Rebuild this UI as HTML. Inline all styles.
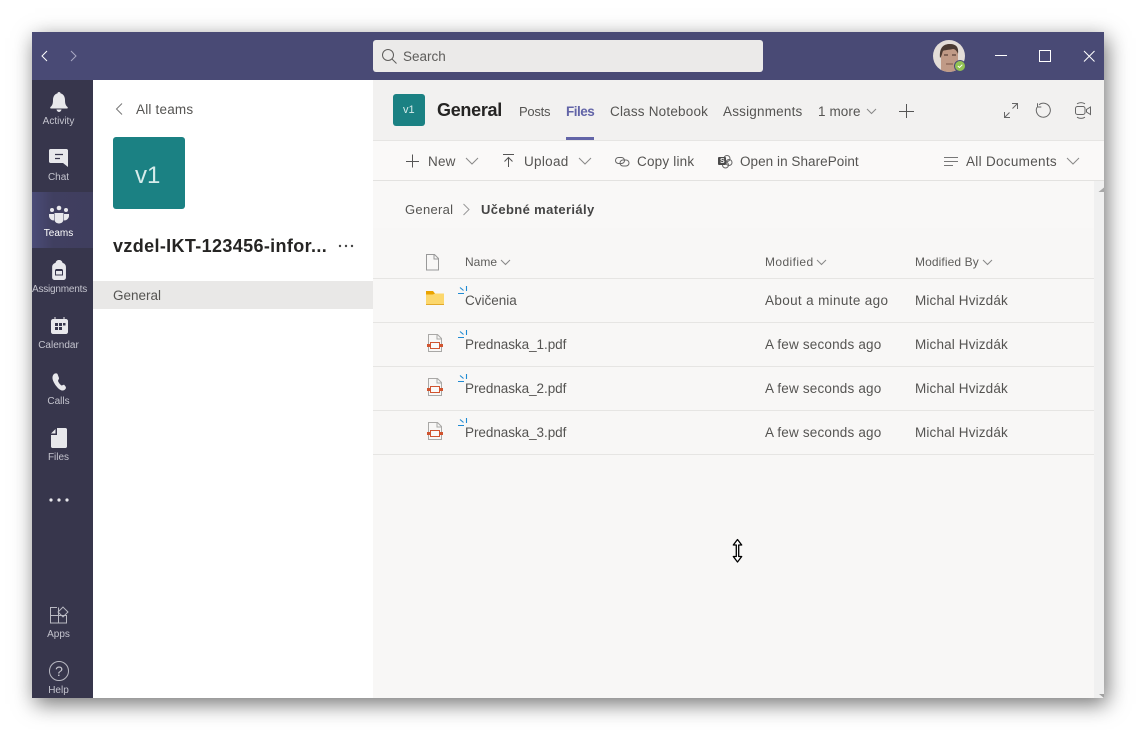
<!DOCTYPE html>
<html><head><meta charset="utf-8">
<style>
html,body{margin:0;padding:0;width:1136px;height:730px;background:#fff;overflow:hidden;font-family:"Liberation Sans",sans-serif;color:#444}
*{box-sizing:border-box}
.a{position:absolute;white-space:nowrap;line-height:1}
#win{position:absolute;left:32px;top:32px;width:1072px;height:666px;box-shadow:3px 6px 20px rgba(0,0,0,.55)}
.r{position:absolute}
.rl{position:absolute;left:28px;width:61px;text-align:center;font-size:10px;color:#c4c4ce;line-height:1;white-space:nowrap}
.t{font-size:13.5px;color:#555452}
.line{position:absolute;height:1px;background:#e6e5e3}
svg{position:absolute;overflow:visible;left:0;top:0}
</style></head><body>
<div id="win"></div>
<div class="r" style="left:32px;top:32px;width:1072px;height:48px;background:#494a75"></div>
<div class="r" style="left:32px;top:80px;width:61px;height:618px;background:#37364c"></div>
<div class="r" style="left:32px;top:192px;width:61px;height:56px;background:linear-gradient(90deg,#4b4c78,#403f60 35%,#3f3e5e)"></div>
<div class="r" style="left:93px;top:80px;width:280px;height:618px;background:#fff"></div>
<div class="r" style="left:373px;top:80px;width:731px;height:618px;background:#f8f7f6"></div>
<div class="r" style="left:373px;top:80px;width:731px;height:60px;background:#f2f1f0"></div>
<div class="r" style="left:373px;top:141px;width:731px;height:39px;background:#faf9f8"></div>
<div class="line" style="left:373px;top:140px;width:731px"></div>
<div class="line" style="left:373px;top:180px;width:731px;background:#e3e2e0"></div>
<div class="r" style="left:1094px;top:181px;width:10px;height:517px;background:#f0f0f0"></div>
<div class="r" style="left:373px;top:181px;width:721px;height:47px;background:#f9f8f7"></div>

<!-- titlebar -->
<div class="r" style="left:373px;top:40px;width:390px;height:32px;background:#ebeae9;border-radius:3px"></div>
<svg width="1136" height="90" fill="none">
<path d="M47 51l-5 5 5 5" stroke="#fff"/>
<path d="M71 51l5 5-5 5" stroke="#a9a9c4"/>
<circle cx="388" cy="55" r="5.500" stroke="#5e5d5b"/><path d="M392 59l4.500 4.500" stroke="#5e5d5b"/>
<path d="M995 55.500h12" stroke="#fff"/>
<rect x="1039.500" y="50.500" width="11" height="11" stroke="#fff"/>
<path d="M1084 51l10.500 10.500M1094.500 51l-10.500 10.500" stroke="#fff"/>
</svg>
<div class="a" style="left:403px;top:50px;font-size:13.500px;color:#5e5d5b">Search</div>
<svg width="1136" height="90">
<defs><clipPath id="c"><circle cx="949" cy="56" r="16"/></clipPath></defs>
<g clip-path="url(#c)"><rect x="933" y="40" width="32" height="32" fill="#e3ddd8"/>
<path d="M941 72V54c0-8 4-10 9-10s8 3 8 10v18z" fill="#c09a86"/>
<path d="M940 58c-1-11 4-14 10-14 6 0 9 3 8 10-1-3-3-5-5-5-4 1-9 1-10 2-1 2-1 5-3 7z" fill="#4a3a32"/>
<path d="M944 55h4M952 55h4" stroke="#5a4238" stroke-width="1.200"/>
<path d="M946 64h7" stroke="#7d5548"/></g>
<circle cx="960" cy="66" r="6" fill="#494a75"/><circle cx="960" cy="66" r="5" fill="#92c353"/>
<path d="M957.800 66l1.700 1.500 2.800-2.800" stroke="#fff" fill="none"/>
</svg>

<!-- rail icons -->
<svg width="100" height="700" fill="#e8e8ec">
<path d="M59 92c-.9 0-1.500.6-1.600 1.400-3 .8-4.400 3.400-4.400 6.600 0 3.500-.6 5.500-2.500 7-.6.5-.3 1.500.5 1.500h16c.8 0 1.100-1 .5-1.500-1.900-1.500-2.500-3.500-2.500-7 0-3.200-1.400-5.800-4.400-6.600-.1-.8-.7-1.400-1.600-1.400z"/>
<path d="M56.500 109.500h5c-.3 1.400-1.200 2.500-2.500 2.500s-2.200-1.100-2.500-2.500z"/>
<path d="M50.500 149h16c.8 0 1.500.7 1.500 1.500V167l-5-4H50.500c-.8 0-1.500-.7-1.500-1.500v-11c0-.8.7-1.500 1.500-1.500z"/>
<path d="M55 154.500h8M55 158.500h5" stroke="#37364c" stroke-width="1.200" fill="none"/>
<circle cx="52" cy="210" r="2"/><circle cx="59" cy="208" r="2.300"/><circle cx="66" cy="210" r="2"/>
<path d="M49 214h5v5c0 .5 0 1-.2 1.500C51 220.500 49 218 49 216zM69 214h-5v5c0 .5 0 1 .2 1.500 2.800 0 4.800-2.500 4.800-4.500zM54.500 213h9v6.500c0 2.200-2 4-4.500 4s-4.500-1.800-4.500-4z"/>
<path d="M53 267c0-2 1-3.500 3-4.300.3-1.700 1.500-2.700 3-2.700s2.700 1 3 2.700c2 .8 3 2.300 3 4.300v10.500c0 1.500-1 2.500-2.500 2.500h-7c-1.500 0-2.500-1-2.500-2.500z" transform="matrix(1.150 0 0 1 -8.800 0)"/>
<path d="M55.500 269.500h7M55.500 270.500h7v4.500h-7z" stroke="#37364c" fill="none"/>
<path d="M53 319h13c1.100 0 2 .9 2 2v11c0 1.100-.9 2-2 2H53c-1.100 0-2-.9-2-2v-11c0-1.100.9-2 2-2z"/>
<path d="M55 317v2M64 317v2" stroke="#e8e8ec"/>
<path d="M55 323h3v3h-3zM59 323h3v3h-3zM63 323h2.500v2.500H63zM55 327h3v3h-3zM59 327h3v3h-3z" fill="#37364c"/>
<path d="M54 374c1-.8 3-1 3.500 0l1.500 4c.2 1-1 2-1 3 .8 2 2 3.500 3.500 4.500 1 0 1.800-1 2.700-.7l1.500 2c.5 1 .2 2-1 3-1.500 1.200-3.500.8-5-.3-3-2.200-6-6.500-7-10-.6-2.200 0-4.300 1.300-5.500z"/>
<path d="M57 428h8.500c.8 0 1.500.7 1.500 1.500v17c0 .8-.7 1.500-1.500 1.500h-13c-.8 0-1.500-.7-1.500-1.500V435h6z"/>
<path d="M55.500 429v4.500H51z"/>
<circle cx="51" cy="500" r="1.600"/><circle cx="59" cy="500" r="1.600"/><circle cx="67" cy="500" r="1.600"/>
<g fill="none" stroke="#b9b9c2">
<path d="M57 607.500h-6.500v15.500h16v-7.500h-16M58.500 607.500v15.500"/>
<rect x="59.500" y="608.500" width="7" height="7" transform="rotate(45 63 612)"/>
<circle cx="59" cy="671" r="9.500"/>
</g>
</svg>
<div class="a" style="left:54px;top:664px;font-size:14px;color:#c8c8d0;width:10px;text-align:center">?</div>
<div class="rl" style="top:117px">Activity</div>
<div class="rl" style="top:173px">Chat</div>
<div class="rl" style="top:229px;color:#fff">Teams</div>
<div class="rl" style="top:285px;left:29px;letter-spacing:-.2px">Assignments</div>
<div class="rl" style="top:341px">Calendar</div>
<div class="rl" style="top:397px">Calls</div>
<div class="rl" style="top:453px">Files</div>
<div class="rl" style="top:630px">Apps</div>
<div class="rl" style="top:686px">Help</div>

<!-- left panel -->
<svg width="400" height="200" fill="none"><path d="M122 103.500l-5.500 5.500 5.500 5.500" stroke="#777"/></svg>
<div class="a t" style="left:136px;top:103px;letter-spacing:.2px">All teams</div>
<div class="r" style="left:113px;top:137px;width:72px;height:72px;background:#1b8183;border-radius:3px"></div>
<div class="a" style="left:135px;top:164px;font-size:24px;color:#d7eceb">v1</div>
<div class="a" style="left:113px;top:237px;font-size:18px;font-weight:700;color:#252423;letter-spacing:.36px">vzdel-IKT-123456-infor...</div>
<svg width="400" height="300" fill="#444"><circle cx="340" cy="246" r="1.200"/><circle cx="346" cy="246" r="1.200"/><circle cx="352" cy="246" r="1.200"/></svg>
<div class="r" style="left:93px;top:281px;width:280px;height:28px;background:#e9e8e7"></div>
<div class="a t" style="left:113px;top:289px">General</div>

<!-- header -->
<div class="r" style="left:393px;top:94px;width:32px;height:32px;background:#1b8183;border-radius:3px"></div>
<div class="a" style="left:403px;top:105px;font-size:11px;color:#d7eceb">v1</div>
<div class="a" style="left:437px;top:101px;font-size:18px;font-weight:700;color:#252423;letter-spacing:-.3px">General</div>
<div class="a t" style="left:519px;top:105px;font-size:13px;letter-spacing:-.25px">Posts</div>
<div class="a t" style="left:566px;top:105px;color:#6264a7;font-weight:700;letter-spacing:-.5px">Files</div>
<div class="r" style="left:566px;top:137px;width:28px;height:3px;background:#6264a7"></div>
<div class="a t" style="left:610px;top:105px;letter-spacing:.2px">Class Notebook</div>
<div class="a t" style="left:723px;top:105px;letter-spacing:.2px">Assignments</div>
<div class="a t" style="left:818px;top:105px;letter-spacing:.1px">1 more</div>
<svg width="1136" height="230" fill="none" stroke="#666">
<path d="M867 109l4.500 4.500 4.500-4.500" stroke="#888"/>
<path d="M906.500 104v14M899 111.500h15" stroke="#555"/>
<path d="M1004.500 117.500l5-5M1004.500 112v5.500h5.500M1012.500 108.500l5-5M1012 103.500h5.500v5.500"/>
<path d="M1039 104.500a7 7 0 1 1-2 2.500M1037.500 103v3.800h3.800" transform="translate(0 .2)"/>
<rect x="1075.500" y="106.500" width="9.500" height="8" rx="2"/><path d="M1090.500 107v7.500l-4-2.500v-2.500zM1077 103.800c2.500-1.500 5.500-1.500 8 0M1077 117.200c2.500 1.500 5.500 1.500 8 0"/>
<path d="M406 161.500h13M412.500 154.500v13" stroke="#555"/>
<path d="M466 158l6 6 6-6" stroke="#888"/>
<path d="M503 154.500h11M508.500 167v-9.500M504.500 161.500l4-4 4 4" stroke="#555"/>
<path d="M579 158l6 6 6-6" stroke="#888"/>
<rect x="615.500" y="157.500" width="9" height="6" rx="3"/><rect x="620" y="160" width="9" height="6" rx="3"/>
<circle cx="727" cy="158.500" r="3"/><circle cx="729" cy="162.500" r="3"/><circle cx="725.500" cy="165" r="3"/>
<path d="M944 157.500h14M944 161.500h14M944 165.500h9" stroke="#777"/>
<path d="M1067 158l6 6 6-6" stroke="#888"/>
<path d="M463.500 204l5.500 5.500-5.500 5.500" stroke="#999"/>
</svg>
<div class="r" style="left:718px;top:157px;width:8px;height:8px;background:#4a4a4a;border-radius:1px"></div>
<div class="a" style="left:720px;top:157.500px;font-size:7px;font-weight:700;color:#fff">S</div>
<div class="a t" style="left:428px;top:155px;letter-spacing:.2px">New</div>
<div class="a t" style="left:524px;top:155px;letter-spacing:.3px">Upload</div>
<div class="a t" style="left:637px;top:155px;letter-spacing:.2px">Copy link</div>
<div class="a t" style="left:740px;top:155px;letter-spacing:.05px">Open in SharePoint</div>
<div class="a t" style="left:966px;top:155px;letter-spacing:.3px">All Documents</div>
<div class="a t" style="left:405px;top:203px;font-size:13px;letter-spacing:.3px">General</div>
<div class="a t" style="left:481px;top:203px;font-size:13px;font-weight:700;color:#444;letter-spacing:.37px">Učebné materiály</div>

<!-- table -->
<svg width="1136" height="500" fill="none">
<path d="M426.500 254.500h8l4 4v11.500h-12zM434 254.500v4.500h4.500" stroke="#999"/>
<path d="M501 260l4.500 4.500 4.500-4.500M817 260l4.500 4.500 4.500-4.500M983 260l4.500 4.500 4.500-4.500" stroke="#888"/>
<path d="M426 293.500h18V305h-18z" fill="#fcd76c"/><path d="M426 291h7l2 2.500-2 1h-7z" fill="#eaa300"/><path d="M426 304.500h18" stroke="#e2a92b"/>
<g stroke="#a9a8a6" fill="#f8f7f6">
<path d="M428.500 334.500h9l4 4v13h-13zM437 334.500v4.500h4.500"/>
<path d="M428.500 378.500h9l4 4v13h-13zM437 378.500v4.500h4.500"/>
<path d="M428.500 422.500h9l4 4v13h-13zM437 422.500v4.500h4.500"/>
</g>
<g fill="#faf9f8" stroke="#d1542f"><rect x="430.500" y="342.500" width="9" height="6"/><rect x="430.500" y="386.500" width="9" height="6"/><rect x="430.500" y="430.500" width="9" height="6"/></g>
<g fill="#d1542f"><rect x="427" y="344" width="3" height="3"/><rect x="440" y="344" width="3" height="3"/><rect x="427" y="388" width="3" height="3"/><rect x="440" y="388" width="3" height="3"/><rect x="427" y="432" width="3" height="3"/><rect x="440" y="432" width="3" height="3"/></g>
<g stroke="#1f8ad2" stroke-width="1.100"><path d="M458 293.500h6M460 287.500l3.500 3M466.500 286v5"/><path d="M458 337.500h6M460 331.500l3.500 3M466.500 330v5"/><path d="M458 381.500h6M460 375.500l3.500 3M466.500 374v5"/><path d="M458 425.500h6M460 419.500l3.500 3M466.500 418v5"/></g>
</svg>
<div class="a" style="left:465px;top:256px;font-size:12px;color:#5e5d5b">Name</div>
<div class="a" style="left:765px;top:256px;font-size:12px;color:#5e5d5b;letter-spacing:.4px">Modified</div>
<div class="a" style="left:915px;top:256px;font-size:12px;color:#5e5d5b;letter-spacing:.1px">Modified By</div>
<div class="line" style="left:373px;top:278px;width:721px"></div>
<div class="line" style="left:373px;top:322px;width:721px"></div>
<div class="line" style="left:373px;top:366px;width:721px"></div>
<div class="line" style="left:373px;top:410px;width:721px"></div>
<div class="line" style="left:373px;top:454px;width:721px"></div>
<div class="a t" style="left:465px;top:294px">Cvičenia</div>
<div class="a t" style="left:765px;top:294px;letter-spacing:.35px">About a minute ago</div>
<div class="a t" style="left:915px;top:294px;letter-spacing:.15px">Michal Hvizdák</div>
<div class="a t" style="left:465px;top:338px;letter-spacing:-.05px">Prednaska_1.pdf</div>
<div class="a t" style="left:765px;top:338px;letter-spacing:.18px">A few seconds ago</div>
<div class="a t" style="left:915px;top:338px;letter-spacing:.15px">Michal Hvizdák</div>
<div class="a t" style="left:465px;top:382px;letter-spacing:-.05px">Prednaska_2.pdf</div>
<div class="a t" style="left:765px;top:382px;letter-spacing:.18px">A few seconds ago</div>
<div class="a t" style="left:915px;top:382px;letter-spacing:.15px">Michal Hvizdák</div>
<div class="a t" style="left:465px;top:426px;letter-spacing:-.05px">Prednaska_3.pdf</div>
<div class="a t" style="left:765px;top:426px;letter-spacing:.18px">A few seconds ago</div>
<div class="a t" style="left:915px;top:426px;letter-spacing:.15px">Michal Hvizdák</div>

<!-- scrollbar arrows + cursor -->
<svg width="1136" height="730">
<path d="M1098.500 192l5.500-4.500V192z" fill="#a8a8a8"/><path d="M1099 694h5v4z" fill="#a0a0a0"/>
<path d="M737.500 539.500l-4.200 5.500h3v11.500h-3l4.200 5.500 4.200-5.500h-3V545h3z" fill="#fff" stroke="#000" stroke-width="1.300" stroke-linejoin="round"/>
</svg>
</body></html>
